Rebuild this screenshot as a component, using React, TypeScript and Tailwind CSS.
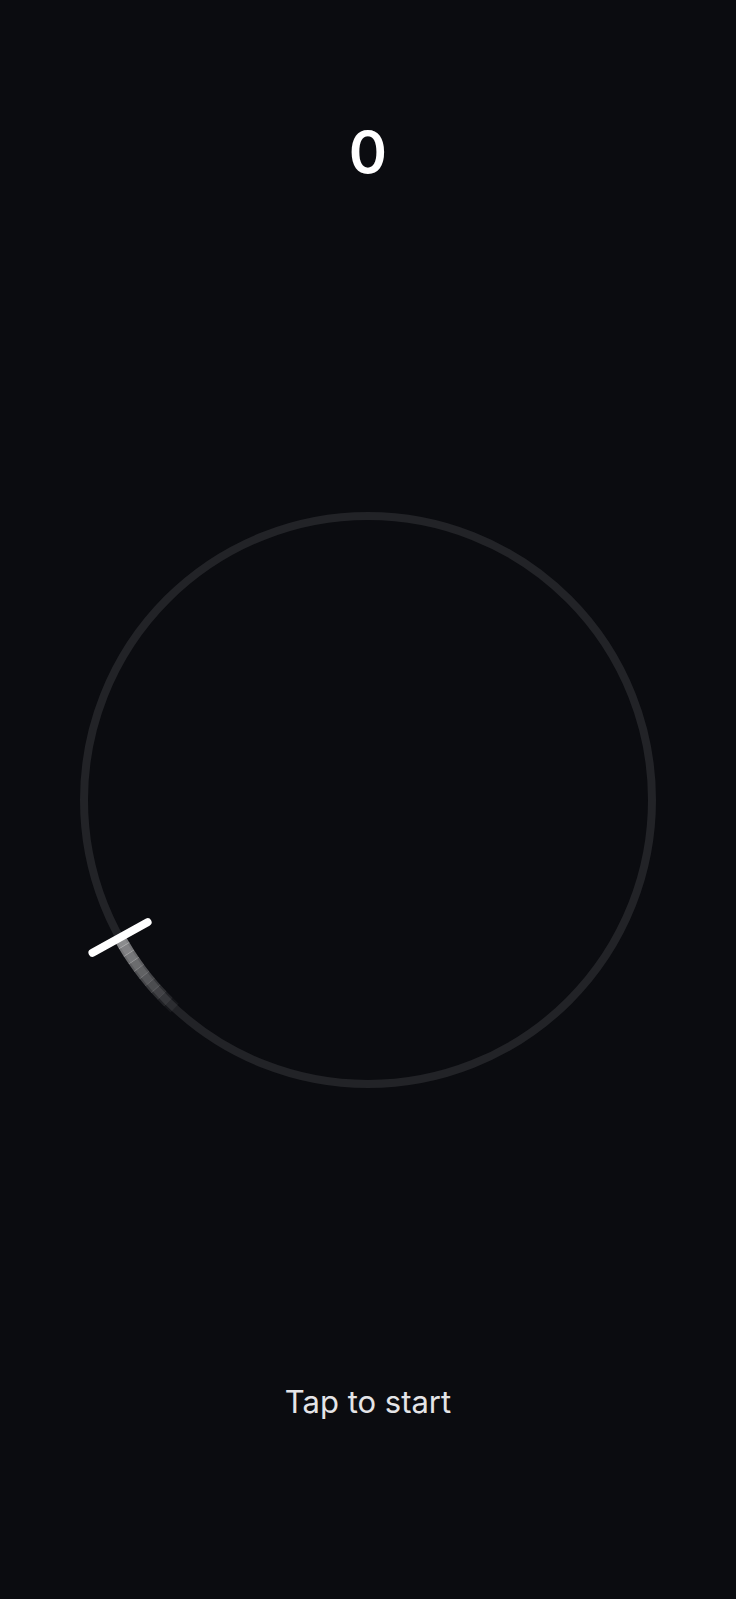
import React from "react";

const CX = 368;
const CY = 320;
const R = 284;

function pt(r: number, deg: number) {
  const a = (deg * Math.PI) / 180;
  return [CX + r * Math.cos(a), CY + r * Math.sin(a)];
}

function arc(r: number, a0: number, a1: number) {
  const [x0, y0] = pt(r, a0);
  const [x1, y1] = pt(r, a1);
  return `M ${x0.toFixed(2)} ${y0.toFixed(2)} A ${r} ${r} 0 0 1 ${x1.toFixed(2)} ${y1.toFixed(2)}`;
}

export default function App() {
  const needleAngle = 151;
  const segs = 10;
  const segLen = 1.8;
  const trail = Array.from({ length: segs }, (_, i) => {
    const a1 = needleAngle - i * segLen;
    const a0 = a1 - segLen - 0.1;
    const op = 0.48 * (1 - i / segs);
    return { d: arc(R, a0, a1), op };
  });
  const [nx0, ny0] = pt(252, needleAngle);
  const [nx1, ny1] = pt(315, needleAngle);

  return (
    <div
      className="w-full h-[1599px] bg-[#0b0c10] flex flex-col items-center overflow-hidden"
      style={{ fontFamily: "Inter, 'Noto Sans', sans-serif" }}
    >
      <div className="pt-[123px] text-white text-[58px] leading-[58px] font-semibold">0</div>
      <div className="mt-[299px] w-[736px] h-[640px]">
        <svg width="736" height="640" viewBox="0 0 736 640">
          <circle cx={CX} cy={CY} r={R} fill="none" stroke="#222327" strokeWidth="8" />
          {trail.map((s, i) => (
            <path
              key={i}
              d={s.d}
              fill="none"
              stroke="#ffffff"
              strokeOpacity={s.op}
              strokeWidth="12"
            />
          ))}
          <line
            x1={nx0}
            y1={ny0}
            x2={nx1}
            y2={ny1}
            stroke="#ffffff"
            strokeWidth="8"
            strokeLinecap="round"
          />
        </svg>
      </div>
      <div className="mt-[262px] text-[#e4e4e7] text-[31px] leading-[40px]">Tap to start</div>
    </div>
  );
}
